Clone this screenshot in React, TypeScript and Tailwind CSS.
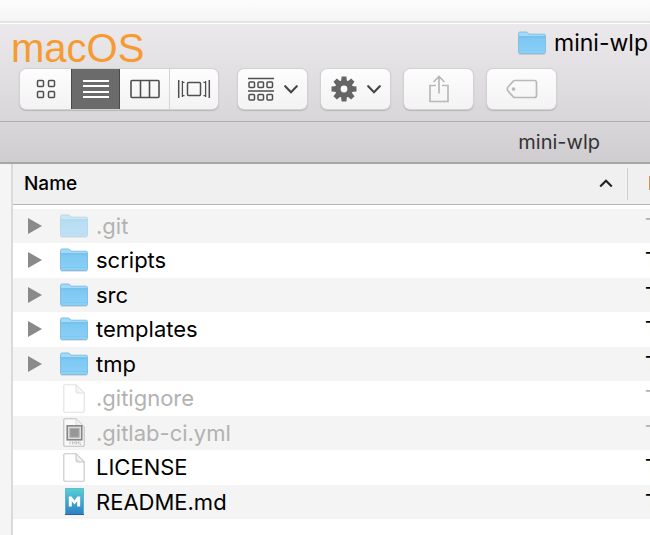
import { ReactNode, useState } from "react";

type Kind = "folder" | "file" | "yml" | "md";
type Item = { name: string; kind: Kind; hidden?: boolean };

const items: Item[] = [
  { name: ".git", kind: "folder", hidden: true },
  { name: "scripts", kind: "folder" },
  { name: "src", kind: "folder" },
  { name: "templates", kind: "folder" },
  { name: "tmp", kind: "folder" },
  { name: ".gitignore", kind: "file", hidden: true },
  { name: ".gitlab-ci.yml", kind: "yml", hidden: true },
  { name: "LICENSE", kind: "file" },
  { name: "README.md", kind: "md" },
];

function FolderIcon() {
  return (
    <svg width="28" height="24" viewBox="0 0 28 24" aria-hidden="true">
      <defs>
        <linearGradient id="folder" x1="0" y1="0" x2="0" y2="1">
          <stop offset="0" stopColor="#7bc7f2" />
          <stop offset="1" stopColor="#8bd0f8" />
        </linearGradient>
      </defs>
      <path d="M1 23.2h26" stroke="#000" strokeOpacity=".16" />
      <path d="M.5 2.5Q.5 1 2 1H8.2Q9.3 1 10 2L11 3.2H26Q27.5 3.2 27.5 4.7V21.4Q27.5 22.5 26.4 22.5H1.6Q.5 22.5.5 21.4Z" fill="#a0dbfb" stroke="#84bee0" />
      <path d="M1 5.8H27V21.5Q27 22 26.4 22H1.6Q1 22 1 21.5Z" fill="url(#folder)" />
      <path d="M1 5.8H27" stroke="#6db8e4" />
      <path d="M1 19.5H27" stroke="#79c2eb" strokeOpacity=".6" />
    </svg>
  );
}

function FileIcon({ yml = false }: { yml?: boolean }) {
  return (
    <svg width="22" height="29" viewBox="0 0 22 29" aria-hidden="true">
      <defs>
        <linearGradient id="fold" x1="0" y1="1" x2="1" y2="0">
          <stop offset="0" stopColor="#d8d8d8" />
          <stop offset=".5" stopColor="#fafafa" />
        </linearGradient>
      </defs>
      <path d="M1.8.8H13L21.2 9V27.2Q21.2 28.2 20.2 28.2H1.8Q.8 28.2.8 27.2V1.8Q.8.8 1.8.8Z" fill="#fff" stroke={yml ? "#8a8a8a" : "#c6c6c6"} strokeWidth="1.1" />
      <path d="M13 .8V7.6Q13 9 14.4 9H21.2Z" fill="url(#fold)" stroke="#c4c4c4" />
      {yml && (
        <>
          <rect x="4.2" y="7.8" width="14.6" height="14" fill="#c8c8c8" stroke="#1c1c1c" strokeWidth="1.6" />
          <rect x="6.9" y="10.4" width="9.2" height="8.8" fill="#3d3d3d" stroke="#6d6d6d" />
          <path d="M6 23.5l1 1.4 1-1.4M7 25v1.5M9.5 26.5v-3l1.3 2 1.3-2v3M13.5 26.5v-3l1 1.4 1-1.4v3M17 23.5v3h1.5" fill="none" stroke="#777" strokeWidth=".7" />
        </>
      )}
    </svg>
  );
}

function MarkdownIcon() {
  return (
    <svg width="19" height="27" viewBox="0 0 19 27" aria-hidden="true">
      <defs>
        <linearGradient id="md" x1="0" y1="0" x2="0" y2="1">
          <stop offset="0" stopColor="#55d0d4" />
          <stop offset="1" stopColor="#2f7ec6" />
        </linearGradient>
      </defs>
      <rect x=".5" y=".5" width="18" height="26" fill="url(#md)" stroke="#3f9fc0" strokeOpacity=".6" />
      <path d="M0 26.5h19" stroke="#27639c" />
      <path d="M3.8 18.6V8.4H6.6L9.5 12.4 12.4 8.4H15.2V18.6H12.2V13.2L9.5 16.6 6.8 13.2V18.6Z" fill="#fff" />
    </svg>
  );
}

function Icon({ kind }: { kind: Kind }) {
  if (kind === "folder") return <FolderIcon />;
  if (kind === "md") return <MarkdownIcon />;
  return <FileIcon yml={kind === "yml"} />;
}

function Chevron() {
  return (
    <svg width="14" height="9" viewBox="0 0 14 9" fill="none" stroke="#454545" strokeWidth="2.1" aria-hidden="true">
      <path d="M1.2 1.2 7 7.2 12.8 1.2" strokeLinecap="round" />
    </svg>
  );
}

const views: { label: string; icon: (c: string) => ReactNode }[] = [
  {
    label: "Icon view",
    icon: (c) => (
      <svg width="20" height="20" viewBox="0 0 20 20" fill="none" stroke={c} strokeWidth="1.5" aria-hidden="true">
        {[1.5, 12.5].map((x) => [1.5, 12.5].map((y) => <rect key={`${x}-${y}`} x={x} y={y} width="6" height="6" rx="1" />))}
      </svg>
    ),
  },
  {
    label: "List view",
    icon: (c) => (
      <svg width="26" height="20" viewBox="0 0 26 20" fill={c} aria-hidden="true">
        {[1, 6, 12, 17].map((y) => <rect key={y} y={y} width="26" height="2" />)}
      </svg>
    ),
  },
  {
    label: "Column view",
    icon: (c) => (
      <svg width="30" height="20" viewBox="0 0 30 20" fill="none" stroke={c} strokeWidth="1.6" aria-hidden="true">
        <rect x="1" y="1.5" width="28" height="17" rx="1" />
        <path d="M10.5 1.5v17M19.5 1.5v17" />
      </svg>
    ),
  },
  {
    label: "Cover flow view",
    icon: (c) => (
      <svg width="34" height="20" viewBox="0 0 34 20" fill="none" stroke={c} strokeWidth="1.5" aria-hidden="true">
        <rect x="10.5" y="3.5" width="13" height="13" rx="1" />
        <path d="M1.7 1v18M32.3 1v18" />
        <path d="M7.5 3.4H5.6M7.5 16.6H5.6M26.5 3.4h1.9M26.5 16.6h1.9" strokeWidth="1.2" />
        <path d="M5.4 2v16M28.6 2v16" strokeWidth="1.3" />
      </svg>
    ),
  },
];

const raised = "bg-linear-to-b from-[#fdfdfd] to-[#f3f3f3] shadow-[0_0_0_1px_#d2d0d3,0_1px_1px_1px_#b9b7ba]";

function ToolButton({ label, disabled = false, children }: { label: string; disabled?: boolean; children: ReactNode }) {
  return (
    <button
      type="button"
      aria-label={label}
      disabled={disabled}
      className={`flex h-10 w-[69px] shrink-0 items-center justify-center gap-2.5 rounded-md ${raised}`}
    >
      {children}
    </button>
  );
}

export default function App() {
  const [view, setView] = useState(1);
  return (
    <div className="flex min-h-screen flex-col overflow-hidden bg-white font-['Inter','Noto_Sans',sans-serif] text-black">
      <div className="h-[23px] border-b-2 border-[#e3e3e3] bg-linear-to-b from-[#fdfdfd] to-[#f4f4f4]" />
      <header className="border-t border-b border-t-white border-b-[#b0aeb0] bg-linear-to-b from-[#ebe9eb] to-[#d8d6d9]">
        <div className="flex h-[43px] items-start justify-between pr-0.5 pl-[11px]">
          <span className="pt-0.5 font-['Liberation_Sans',Arial,sans-serif] text-[40px] leading-[44px] text-[#f59b32]">macOS</span>
          <h1 className="flex items-center gap-2 pt-[3px] text-[23px] leading-8">
            <FolderIcon />
            mini-wlp
          </h1>
        </div>
        <div className="flex gap-3.5 px-5 pt-0.5 pb-3">
          <div role="group" aria-label="View" className={`mr-1.5 flex h-10 shrink-0 overflow-hidden rounded-md ${raised}`}>
            {views.map((v, i) => (
              <button
                key={v.label}
                type="button"
                aria-label={v.label}
                aria-pressed={view === i}
                onClick={() => setView(i)}
                className={`flex w-[49px] items-center justify-center first:w-[51px] ${view === i ? "border-x border-[#4a4a4a] bg-[#6b6b6b]" : i === 3 ? "border-l border-[#d4d4d4]" : ""}`}
              >
                {v.icon(view === i ? "#ffffff" : "#4f4f4f")}
              </button>
            ))}
          </div>
          <ToolButton label="Group items">
            <svg width="26" height="25" viewBox="0 0 26 25" fill="none" stroke="#4f4f4f" strokeWidth="1.5" aria-hidden="true">
              <path d="M0 1.5h26M0 14h26" />
              {[1, 10, 19].map((x) => [5, 17.5].map((y) => <rect key={`${x}-${y}`} x={x} y={y} width="5.5" height="5.5" rx="1" />))}
            </svg>
            <Chevron />
          </ToolButton>
          <ToolButton label="Actions">
            <svg width="26" height="26" viewBox="-13 -13 26 26" aria-hidden="true">
              {[0, 45, 90, 135].map((a) => (
                <path key={a} d="M-2.4-12.5H2.4L3-7V7L2.4 12.5H-2.4L-3 7V-7Z" fill="#656565" transform={`rotate(${a})`} />
              ))}
              <circle r="9" fill="#656565" />
              <circle r="3.4" fill="#fafafa" />
            </svg>
            <Chevron />
          </ToolButton>
          <ToolButton label="Share" disabled>
            <svg width="20" height="28" viewBox="0 0 20 28" fill="none" stroke="#b9b9b9" strokeWidth="1.7" aria-hidden="true">
              <path d="M7 10.5H1V26.5H19V10.5H13M10 18.5V1.5M4.5 7 10 1.5 15.5 7" />
            </svg>
          </ToolButton>
          <ToolButton label="Edit tags" disabled>
            <svg width="32" height="20" viewBox="0 0 32 20" fill="none" stroke="#b9b9b9" strokeWidth="1.7" aria-hidden="true">
              <path d="M9 1.5H28.5Q30.5 1.5 30.5 3.5V16.5Q30.5 18.5 28.5 18.5H9Q8 18.5 7.3 17.8L2 12Q.6 10 2 8L7.3 2.2Q8 1.5 9 1.5Z" />
              <circle cx="7.5" cy="10" r="1" fill="#b9b9b9" />
            </svg>
          </ToolButton>
        </div>
      </header>
      <div className="flex h-[42px] items-center justify-end border-b-2 border-[#a7a5a7] bg-linear-to-b from-[#d8d6d8] to-[#cfcdd0] pr-[50px] text-xl text-[#333]">
        mini-wlp
      </div>
      <main className="flex grow">
        <div className="w-[13px] shrink-0 border-r-2 border-[#dadada] bg-[#f5f5f5]" />
        <table className="w-full grow table-fixed border-collapse self-start text-left">
          <thead>
            <tr className="h-10 border-b border-[#b5b5b5] bg-[#f0f0f0] text-[19px] whitespace-nowrap">
              <th className="p-0 font-medium" aria-sort="ascending">
                <button type="button" className="flex w-full items-center justify-between pr-3.5 pl-[11px]">
                  Name
                  <svg width="14" height="9" viewBox="0 0 14 9" fill="none" stroke="#222" strokeWidth="2.1" aria-hidden="true">
                    <path d="M1.2 7.5 7 1.7 12.8 7.5" />
                  </svg>
                </button>
              </th>
              <th className="w-[23px] overflow-hidden p-0 font-normal">
                <div className="border-l border-[#cfcfcf] py-0.5 pl-5">Date Modified</div>
              </th>
            </tr>
          </thead>
          <tbody className="text-[22px] leading-7 whitespace-nowrap before:block before:h-1">
            {items.map((it) => (
              <tr key={it.name} className={`odd:h-[34px] odd:bg-[#f4f4f4] even:h-[35px] ${it.hidden ? "text-[#b2b2b2]" : ""}`}>
                <td className="p-0">
                  <div className="flex items-center pl-[15px]">
                    <div className="flex w-8 shrink-0">
                      {it.kind === "folder" && (
                        <button type="button" aria-label={`Expand ${it.name}`}>
                          <svg width="14" height="16" viewBox="0 0 14 16" fill="#8a8a8a" aria-hidden="true">
                            <path d="M0 0 14 8 0 16Z" />
                          </svg>
                        </button>
                      )}
                    </div>
                    <div className={`mr-2 flex w-7 shrink-0 justify-center ${it.hidden ? "opacity-50" : ""}`}>
                      <Icon kind={it.kind} />
                    </div>
                    {it.name}
                  </div>
                </td>
                <td className="overflow-hidden p-0 pl-[18px] text-xl">Today</td>
              </tr>
            ))}
          </tbody>
        </table>
      </main>
    </div>
  );
}
